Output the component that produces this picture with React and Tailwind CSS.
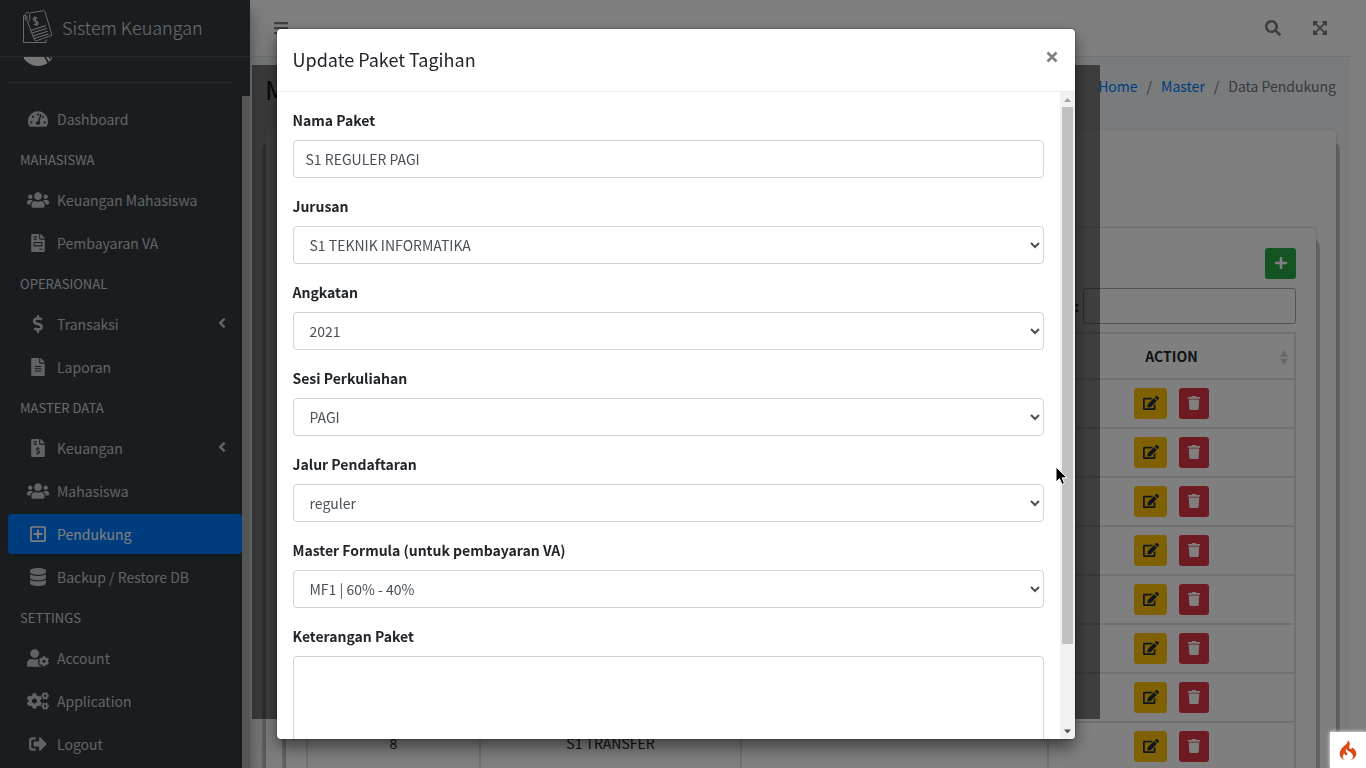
import React from 'react';
import {
  FaTachometerAlt, FaUsers, FaFileInvoice, FaDollarSign, FaFileAlt, FaFileInvoiceDollar,
  FaRegPlusSquare, FaDatabase, FaUserCog, FaCogs, FaSignOutAlt, FaAngleLeft, FaBars,
  FaSearch, FaExpandArrowsAlt, FaPlus, FaEdit, FaTrash,
} from 'react-icons/fa';
import { SiCodeigniter } from 'react-icons/si';

const MENU = [
  { label: 'Dashboard', icon: FaTachometerAlt, size: 20 },
  { header: 'MAHASISWA' },
  { label: 'Keuangan Mahasiswa', icon: FaUsers, size: 22 },
  { label: 'Pembayaran VA', icon: FaFileInvoice, size: 18 },
  { header: 'OPERASIONAL' },
  { label: 'Transaksi', icon: FaDollarSign, size: 18, sub: true },
  { label: 'Laporan', icon: FaFileAlt, size: 18 },
  { header: 'MASTER DATA' },
  { label: 'Keuangan', icon: FaFileInvoiceDollar, size: 18, sub: true },
  { label: 'Mahasiswa', icon: FaUsers, size: 22 },
  { label: 'Pendukung', icon: FaRegPlusSquare, size: 18, active: true },
  { label: 'Backup / Restore DB', icon: FaDatabase, size: 18 },
  { header: 'SETTINGS' },
  { label: 'Account', icon: FaUserCog, size: 22 },
  { label: 'Application', icon: FaCogs, size: 22 },
  { label: 'Logout', icon: FaSignOutAlt, size: 18 },
];

const ROWS = [
  { id: 1 },
  { id: 2 },
  { id: 3 },
  { id: 4 },
  { id: 5 },
  { id: 6 },
  { id: 7 },
  { id: 8, no: '8', name: 'S1 TRANSFER' },
];

const FIELDS = [
  { id: 'jurusan', label: 'Jurusan', value: 'S1 TEKNIK INFORMATIKA' },
  { id: 'angkatan', label: 'Angkatan', value: '2021' },
  { id: 'sesi', label: 'Sesi Perkuliahan', value: 'PAGI' },
  { id: 'jalur', label: 'Jalur Pendaftaran', value: 'reguler' },
  { id: 'formula', label: 'Master Formula (untuk pembayaran VA)', value: 'MF1 | 60% - 40%' },
];

function Logo() {
  return (
    <svg viewBox="0 0 32 36" className="h-9 w-8 shrink-0" fill="none" stroke="#d4d4d4" strokeWidth="1" aria-hidden="true">
      <path d="M3 5.500H1.500V32.500H24V29.500" />
      <path d="M8 2.800 21.500 0.700Q22.600 0.600 22.900 1.600L30 25.200 14.500 30.800Q13 31.200 12.500 29.800L5.500 12" strokeLinejoin="round" />
      <path d="M3.300 10.500V4.800C3.300 1.500 7.600 1.500 7.600 4.800V9.800C7.600 12.300 4.900 12.300 4.900 9.800V5.500" />
      <path d="M15.300 8.600C14.200 7 10.800 7.700 11.300 9.700 11.800 11.700 15.500 10.400 16.100 12.500 16.600 14.700 12.900 15.400 11.900 13.700M12.600 6.300 14.900 16" strokeWidth="1.200" />
      <path d="M8.500 20.500 24 15.500M9.300 23.200 25 18.300M11 26 25.800 21.200M12 28.500 26.500 24" strokeWidth="1.200" />
    </svg>
  );
}

function Sidebar() {
  return (
    <aside className="relative z-10 flex w-[250px] shrink-0 flex-col overflow-hidden bg-[#343a40] shadow-[0_14px_28px_rgba(0,0,0,0.25),0_10px_10px_rgba(0,0,0,0.22)]">
      <a href="#home" className="flex h-[57px] shrink-0 items-center gap-2 border-b border-[#4b545c] pl-[22px]">
        <Logo />
        <span className="pb-0.5 text-[18px] font-light leading-[30px] text-white/80">Sistem Keuangan</span>
      </a>
      <div className="flex min-h-0 flex-1">
        <div className="min-w-0 flex-1 overflow-hidden pl-2">
          <div className="mr-2 h-[26px] border-b border-[#4f5962] pl-4">
            <svg viewBox="0 0 28 10" className="h-2.5 w-7" aria-hidden="true">
              <circle cx="14" cy="-8" r="17" fill="#efefef" />
              <path d="M20.500 -1 24.500 6M24.500 -1 27 2" stroke="#343a40" strokeWidth="1.600" />
            </svg>
          </div>
          <nav className="flex flex-col gap-[3px] pt-4">
            {MENU.map((item) =>
              item.header ? (
                <div key={item.header} className="-mb-[3px] flex h-[38px] items-center pb-0.5 pl-3 text-[13px] text-[#d0d4db]">
                  {item.header}
                </div>
              ) : (
                <a
                  key={item.label}
                  href={'#' + item.label}
                  className={
                    'flex h-10 shrink-0 items-center rounded pl-4 pr-3 ' +
                    (item.active ? 'bg-[#007bff] text-white shadow' : 'text-[#c2c7d0]')
                  }
                >
                  <span className="flex w-[27px] justify-center">
                    <item.icon size={item.size} />
                  </span>
                  <span className="ml-1.5 flex-1 leading-6">{item.label}</span>
                  {item.sub && <FaAngleLeft size={16} className="mb-0.5" />}
                </a>
              )
            )}
          </nav>
        </div>
        <div className="flex w-2 flex-col pt-[39px]">
          <div className="flex-1 bg-[#aaaaaa]" />
        </div>
      </div>
    </aside>
  );
}

function SortIcon() {
  return (
    <svg viewBox="0 0 8 15" className="absolute right-1.5 top-4 h-[15px] w-2" fill="#d2d2d2" aria-hidden="true">
      <path d="M4 0 8 7H0ZM0 8.500H8L4 15Z" />
    </svg>
  );
}

function DataTable() {
  const cell = 'border-2 border-[#dee2e6] text-center';
  return (
    <table className="w-full table-fixed border-collapse text-[#212529]">
      <colgroup>
        <col className="w-[173px]" />
        <col className="w-[261px]" />
        <col />
        <col className="w-[247px]" />
      </colgroup>
      <thead>
        <tr className="h-[46px] font-bold">
          {['', '', '', 'ACTION'].map((h, i) => (
            <th key={i} className={cell + ' relative border-b border-b-[#111111]'}>
              {h}
              <SortIcon />
            </th>
          ))}
        </tr>
      </thead>
      <tbody>
        {ROWS.map((row) => (
          <tr key={row.id} className="h-[49px]">
            <td className={cell + ' pb-1.5'}>{row.no}</td>
            <td className={cell + ' pb-1.5'}>{row.name}</td>
            <td className={cell} />
            <td className={cell}>
              <div className="flex items-center justify-center gap-3">
                <button type="button" aria-label="Edit" className="flex h-[31px] w-[33px] items-center justify-center rounded-[3px] bg-[#ffc107] pb-0.5 text-[#1f2d3d]">
                  <FaEdit size={16} />
                </button>
                <button type="button" aria-label="Hapus" className="flex h-[31px] w-[30px] items-center justify-center rounded-[3px] bg-[#dc3545] pb-0.5 text-white">
                  <FaTrash size={14} />
                </button>
              </div>
            </td>
          </tr>
        ))}
      </tbody>
    </table>
  );
}

function Page() {
  const card =
    'rounded bg-white shadow-[0_0_1px_rgba(0,0,0,0.125),0_1px_3px_rgba(0,0,0,0.2),0_16px_0_4px_rgba(0,0,0,0.2)]';
  return (
    <div className="mr-[15px] flex min-w-0 flex-1 flex-col bg-[#f4f6f9]">
      <header className="flex h-[57px] shrink-0 items-center justify-between border-b border-[#dee2e6] bg-white px-[23px] text-[#7c7c7c]">
        <button type="button" aria-label="Menu"><FaBars size={16} /></button>
        <div className="flex gap-[31px]">
          <button type="button" aria-label="Cari"><FaSearch size={16} /></button>
          <button type="button" aria-label="Layar penuh"><FaExpandArrowsAlt size={16} /></button>
        </div>
      </header>
      <div className="flex items-start justify-between px-[15px] pt-[15px]">
        <h1 className="text-[26px] leading-[33px] text-[#212529]">Master</h1>
        <nav className="flex gap-[9px] pb-2 pt-0.5 leading-6 text-[#6c757d]">
          <a href="#home" className="text-[#007bff]">Home</a>
          <span>/</span>
          <a href="#master" className="text-[#007bff]">Master</a>
          <span>/</span>
          <span>Data Pendukung</span>
        </nav>
      </div>
      <main className={card + ' ml-4 mr-[15px] mt-6 h-[900px] px-5 pt-[97px]'}>
        <section className={card + ' h-[800px] border-t border-[#dfdfdf] px-5 pt-5'}>
          <div className="flex justify-end">
            <button type="button" aria-label="Tambah" className="flex h-[31px] w-[31px] items-center justify-center rounded-[3px] bg-[#28a745] pb-0.5 text-white">
              <FaPlus size={14} />
            </button>
          </div>
          <div className="mb-2 mt-[9px] flex items-center justify-end gap-1">
            <label htmlFor="search" className="font-bold">:</label>
            <input id="search" className="h-9 w-[213px] rounded-[3px] border border-[#aaaaaa] px-1" />
          </div>
          <DataTable />
        </section>
      </main>
    </div>
  );
}

function Modal() {
  const control = 'block h-[38px] w-full rounded border border-[#ced4da] bg-white px-3 text-[#495057]';
  return (
    <div className="fixed inset-0 z-30 flex justify-center py-[29px] pr-[15px]">
      <div role="dialog" aria-labelledby="title" className="flex w-full max-w-[798px] flex-col overflow-hidden rounded bg-white shadow-[0_8px_16px_rgba(0,0,0,0.5),0_0_2px_rgba(0,0,0,0.6)]">
        <div className="flex h-[63px] shrink-0 items-start justify-between border-b border-[#e9ecef] px-4 pt-4">
          <h2 id="title" className="text-[18px] leading-7">Update Paket Tagihan</h2>
          <button type="button" aria-label="Tutup" className="flex h-6 items-center text-[#7f7f7f]">
            <svg viewBox="0 0 14 12" className="h-3 w-3.5" aria-hidden="true">
              <path d="M2.500 1.500 11.500 10.500M11.500 1.500 2.500 10.500" stroke="currentColor" strokeWidth="2.600" />
            </svg>
          </button>
        </div>
        <div className="flex min-h-0 flex-1">
          <form className="flex min-w-0 flex-1 flex-col gap-4 overflow-hidden p-4">
            <div>
              <label htmlFor="nama" className="mb-2 block font-bold leading-6">Nama Paket</label>
              <input id="nama" defaultValue="S1 REGULER PAGI" className={control} />
            </div>
            {FIELDS.map((f) => (
              <div key={f.id}>
                <label htmlFor={f.id} className="mb-2 block font-bold leading-6">{f.label}</label>
                <select id={f.id} className={control}>
                  <option>{f.value}</option>
                </select>
              </div>
            ))}
            <div>
              <label htmlFor="ket" className="mb-2 block font-bold leading-6">Keterangan Paket</label>
              <textarea id="ket" className="block h-[120px] w-full resize-none rounded border border-[#ced4da] px-3 py-1.5" />
            </div>
          </form>
          <div className="flex w-[15px] shrink-0 flex-col items-center justify-between bg-[#f1f1f1]">
            <svg viewBox="0 0 15 15" className="h-[15px] w-[15px]" aria-hidden="true"><path d="M4 10 7.500 6 11 10Z" fill="#a3a3a3" /></svg>
            <div className="flex w-[11px] flex-1 flex-col">
              <div className="h-[87%] bg-[#c1c1c1]" />
            </div>
            <svg viewBox="0 0 15 15" className="h-[15px] w-[15px]" aria-hidden="true"><path d="M4 5.500 7.500 9.500 11 5.500Z" fill="#505050" /></svg>
          </div>
        </div>
      </div>
    </div>
  );
}

export default function App() {
  return (
    <div className="relative flex h-screen overflow-hidden bg-white font-['Noto_Sans_CJK_SC',sans-serif] text-[14px] text-[#212529]">
      <Sidebar />
      <Page />
      <div className="absolute inset-0 z-20 bg-black/50" />
      <div className="absolute bottom-[49px] left-[252px] right-[266px] top-[65px] z-20 bg-black/50" />
      <Modal />
      <svg viewBox="0 0 13 20" className="absolute left-[1055px] top-[466px] z-40 h-5 w-[13px]" aria-hidden="true">
        <path d="M1 1V16L4.500 12.700 7 18.500 9.500 17.400 7.100 11.800H12Z" fill="#000000" stroke="#ffffff" strokeWidth="1" />
      </svg>
      <a href="#debug" aria-label="Debug" className="absolute bottom-0 right-0 z-40 flex h-9 w-9 items-center justify-center bg-white text-[#dd4814] shadow-[0_0_4px_#ffffff]">
        <SiCodeigniter size={20} />
      </a>
    </div>
  );
}
